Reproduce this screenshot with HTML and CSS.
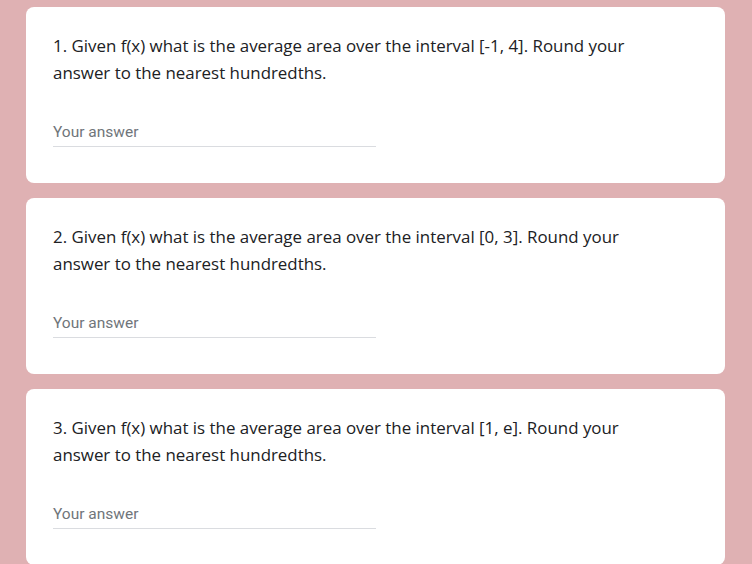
FILE: index.html
```html
<!DOCTYPE html>
<html>
<head>
<meta charset="utf-8">
<link rel="stylesheet" href="styles.css">
</head>
<body>
<div class="page">
  <div class="card">
    <div class="question">1. Given f(x) what is the average area over the interval [-1, 4]. Round your answer to the nearest hundredths.</div>
    <div class="answer"><span class="placeholder">Your answer</span></div>
  </div>
  <div class="card">
    <div class="question">2. Given f(x) what is the average area over the interval [0, 3]. Round your answer to the nearest hundredths.</div>
    <div class="answer"><span class="placeholder">Your answer</span></div>
  </div>
  <div class="card">
    <div class="question">3. Given f(x) what is the average area over the interval [1, e]. Round your answer to the nearest hundredths.</div>
    <div class="answer"><span class="placeholder">Your answer</span></div>
  </div>
</div>
</body>
</html>
```
FILE: styles.css
```css
html, body {
  margin: 0;
  padding: 0;
  background: #dfb1b3;
  overflow: hidden;
}
.page {
  display: flex;
  flex-direction: column;
  gap: 15px;
  padding: 7px 27px 0 26px;
}
.card {
  background: #ffffff;
  border-radius: 8px;
  padding: 25px 27px 35px 27px;
  height: 176px;
  box-sizing: border-box;
  flex-shrink: 0;
}
.question {
  font-family: "Open Sans", sans-serif;
  font-size: 16.9px;
  line-height: 27px;
  color: #202124;
  width: 600px;
}
.answer {
  margin-top: 35px;
  width: 323px;
  border-bottom: 1px solid #dadce0;
  height: 26px;
  box-sizing: border-box;
}
.placeholder {
  font-family: Roboto, sans-serif;
  font-size: 15.5px;
  line-height: 22px;
  color: #70757a;
  display: block;
}
```
